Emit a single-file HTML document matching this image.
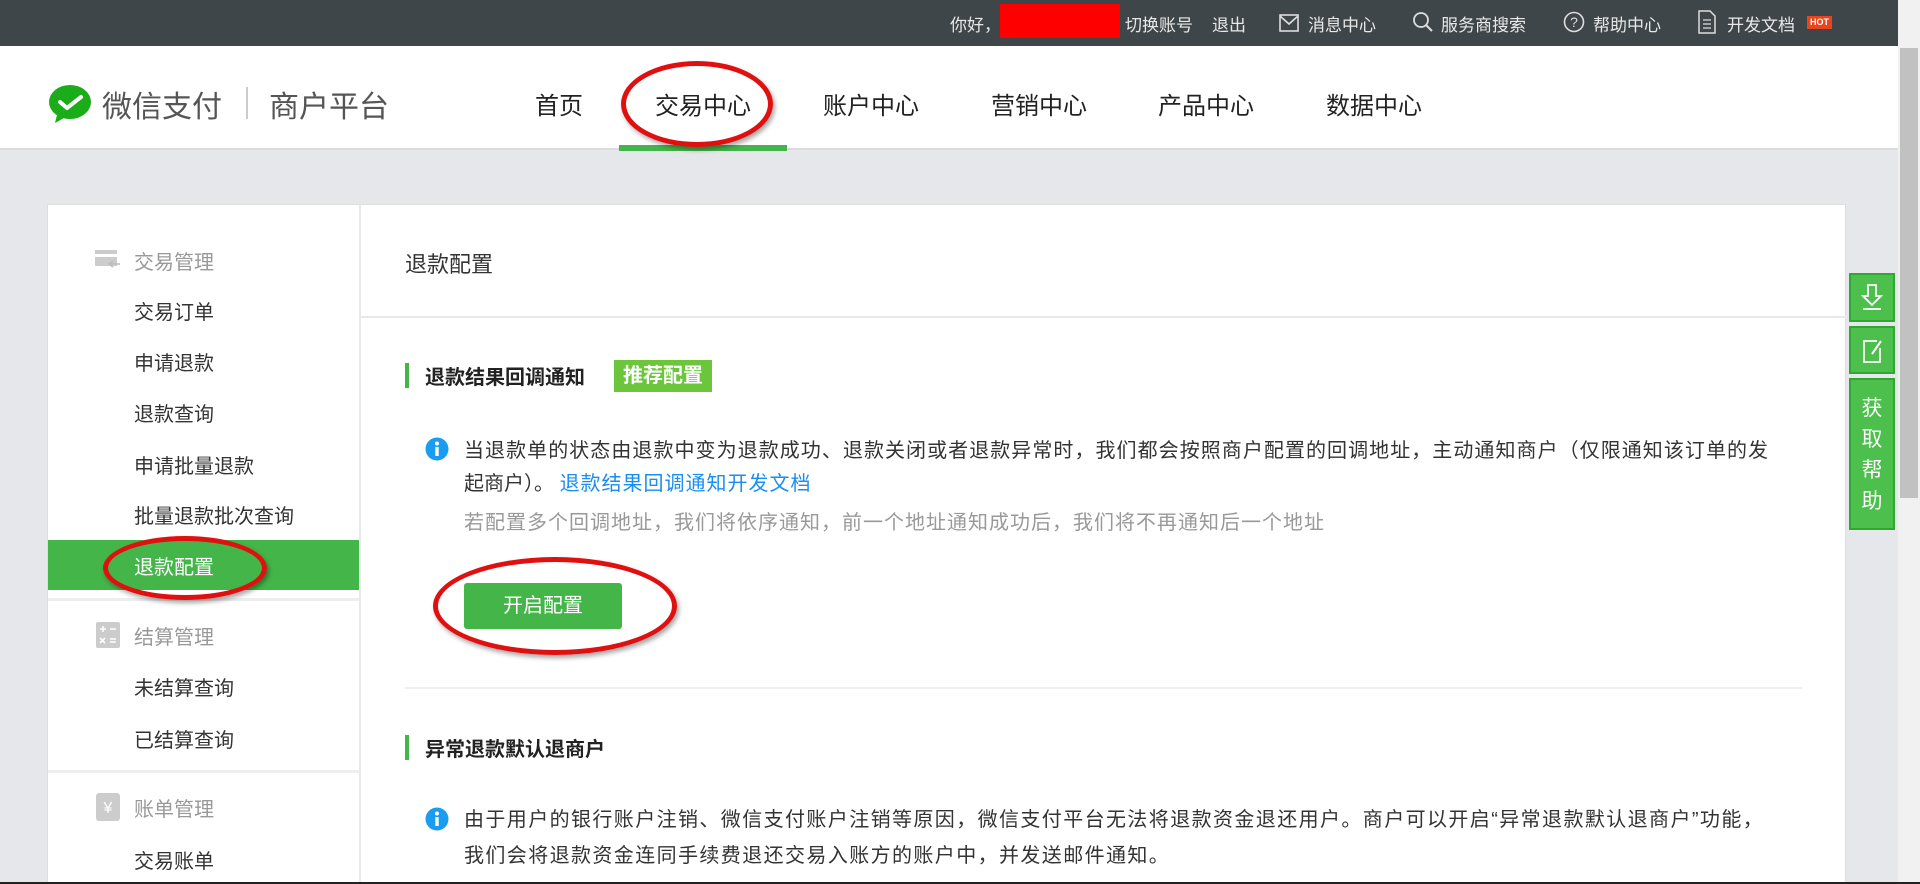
<!DOCTYPE html>
<html><head><meta charset="utf-8"><style>
*{margin:0;padding:0;box-sizing:border-box}
body{width:1920px;height:884px;overflow:hidden;background:#e6e7eb;font-family:"Liberation Sans","Noto Sans CJK SC",sans-serif;position:relative;color:#333}
.a{position:absolute;white-space:nowrap}
.top{left:0;top:0;width:1898px;height:46px;background:#3f4649}
.tt{color:#e8e8e8;font-size:17px;top:11px}
.hdr{left:0;top:46px;width:1898px;height:104px;background:#fff;border-bottom:2px solid #dcdcdc}
.nav{font-size:24px;color:#222;top:86px}
.side{font-size:20px;color:#333;left:134px}
.sideg{font-size:20px;color:#999;left:134px}
.body{font-size:20px;color:#333}
.ell{position:absolute;border:5px solid #e01010;border-radius:50%;box-shadow:2px 3px 5px rgba(0,0,0,.35)}
.fb{position:absolute;left:1849px;width:46px;background:#4cbf4c;border:2px solid #2fa82f}
</style></head><body>
<div class="a top"></div>
<div class="a tt" style="left:950px">你好，</div>
<div class="a" style="left:1000px;top:4px;width:120px;height:34px;background:#f00"></div>
<div class="a tt" style="left:1125px">切换账号</div>
<div class="a tt" style="left:1212px">退出</div>
<svg class="a" style="left:1279px;top:14px" width="20" height="18" viewBox="0 0 20 18"><rect x="1" y="1" width="18" height="16" fill="none" stroke="#ddd" stroke-width="1.6"/><path d="M1 2l9 8 9-8" fill="none" stroke="#ddd" stroke-width="1.6"/></svg>
<div class="a tt" style="left:1308px">消息中心</div>
<svg class="a" style="left:1412px;top:11px" width="22" height="22" viewBox="0 0 22 22"><circle cx="9" cy="9" r="7" fill="none" stroke="#ddd" stroke-width="1.8"/><path d="M14 14l6 6" stroke="#ddd" stroke-width="2"/></svg>
<div class="a tt" style="left:1441px">服务商搜索</div>
<svg class="a" style="left:1563px;top:11px" width="22" height="22" viewBox="0 0 22 22"><circle cx="11" cy="11" r="9.5" fill="none" stroke="#ddd" stroke-width="1.6"/><text x="11" y="16" font-size="14" fill="#ddd" text-anchor="middle" font-family="Liberation Sans">?</text></svg>
<div class="a tt" style="left:1593px">帮助中心</div>
<svg class="a" style="left:1698px;top:10px" width="18" height="24" viewBox="0 0 18 24"><path d="M1 1h11l5 5v17H1z" fill="none" stroke="#ddd" stroke-width="1.5"/><path d="M5 10h8M5 14h8M5 18h8" stroke="#ddd" stroke-width="1.3"/></svg>
<div class="a tt" style="left:1727px">开发文档</div>
<div class="a" style="left:1807px;top:16px;width:25px;height:13px;background:#e8441d;color:#fff;font-size:9px;font-weight:bold;line-height:13px;text-align:center">HOT</div>
<div class="a" style="left:1898px;top:0;width:22px;height:884px;background:#f1f1f1"></div>
<div class="a" style="left:1900px;top:48px;width:18px;height:450px;background:#c1c1c1"></div>

<div class="a hdr"></div>
<svg class="a" style="left:48px;top:84px" width="46" height="40" viewBox="0 0 46 40"><ellipse cx="22" cy="18" rx="21" ry="17" fill="#1aad19"/><path d="M9 31l-2 8 9-5z" fill="#1aad19"/><path d="M12 18l7 6 14-11" fill="none" stroke="#fff" stroke-width="4" stroke-linecap="round" stroke-linejoin="round"/></svg>
<div class="a" style="left:102px;top:82px;font-size:30px;color:#555">微信支付</div>
<div class="a" style="left:246px;top:87px;width:2px;height:32px;background:#ccc"></div>
<div class="a" style="left:269px;top:82px;font-size:30px;color:#555">商户平台</div>
<div class="a nav" style="left:535px">首页</div>
<div class="a nav" style="left:655px">交易中心</div>
<div class="a nav" style="left:823px">账户中心</div>
<div class="a nav" style="left:991px">营销中心</div>
<div class="a nav" style="left:1158px">产品中心</div>
<div class="a nav" style="left:1326px">数据中心</div>
<div class="a" style="left:619px;top:145px;width:168px;height:6px;background:#44b549"></div>

<div class="a" style="left:47px;top:204px;width:1799px;height:680px;background:#fff;border:1px solid #ddd"></div>
<div class="a" style="left:359px;top:205px;width:2px;height:679px;background:#e8e8e8"></div>
<svg class="a" style="left:95px;top:250px" width="26" height="20" viewBox="0 0 26 20"><rect x="0" y="0" width="22" height="16" fill="#ccc"/><rect x="0" y="4" width="22" height="3" fill="#fff"/><path d="M14 14h11M18 11l-4 3 4 3" stroke="#bbb" stroke-width="1.6" fill="none"/></svg>
<div class="a sideg" style="top:246px">交易管理</div>
<div class="a side" style="top:296px">交易订单</div>
<div class="a side" style="top:347px">申请退款</div>
<div class="a side" style="top:398px">退款查询</div>
<div class="a side" style="top:450px">申请批量退款</div>
<div class="a side" style="top:500px">批量退款批次查询</div>
<div class="a" style="left:48px;top:540px;width:311px;height:50px;background:#44b549"></div>
<div class="a side" style="top:551px;color:#fff">退款配置</div>
<div class="a" style="left:48px;top:598px;width:311px;height:3px;background:#eee"></div>
<svg class="a" style="left:96px;top:622px" width="24" height="26" viewBox="0 0 24 26"><rect width="24" height="26" rx="2" fill="#ccc"/><path d="M4 7h6M7 4v6M14 7h6M4 16l5 5M9 16l-5 5M14 17h6M14 20h6" stroke="#fff" stroke-width="1.6"/></svg>
<div class="a sideg" style="top:621px">结算管理</div>
<div class="a side" style="top:672px">未结算查询</div>
<div class="a side" style="top:724px">已结算查询</div>
<div class="a" style="left:48px;top:770px;width:311px;height:3px;background:#eee"></div>
<svg class="a" style="left:96px;top:793px" width="24" height="28" viewBox="0 0 24 28"><rect width="24" height="28" rx="3" fill="#ccc"/><text x="12" y="20" font-size="16" fill="#fff" text-anchor="middle" font-family="Liberation Sans">¥</text></svg>
<div class="a sideg" style="top:793px">账单管理</div>
<div class="a side" style="top:845px">交易账单</div>

<div class="a" style="left:405px;top:247px;font-size:22px;color:#333">退款配置</div>
<div class="a" style="left:361px;top:316px;width:1485px;height:2px;background:#e8e8e8"></div>
<div class="a" style="left:405px;top:363px;width:4px;height:25px;background:#44b549"></div>
<div class="a" style="left:425px;top:361px;font-size:20px;font-weight:bold;color:#222">退款结果回调通知</div>
<div class="a" style="left:614px;top:360px;width:98px;height:32px;background:#6cc63c;color:#fff;font-size:20px;font-weight:bold;text-align:center;line-height:32px">推荐配置</div>
<svg class="a" style="left:425px;top:437px" width="24" height="24" viewBox="0 0 24 24"><circle cx="12" cy="12" r="11.5" fill="#1a9cf0"/><rect x="10.3" y="10" width="3.4" height="9" fill="#fff"/><circle cx="12" cy="6.5" r="2" fill="#fff"/></svg>
<div class="a body" style="left:464px;top:434px;letter-spacing:1.05px">当退款单的状态由退款中变为退款成功、退款关闭或者退款异常时，我们都会按照商户配置的回调地址，主动通知商户（仅限通知该订单的发</div>
<div class="a body" style="left:464px;top:467px">起商户）。 <span style="color:#1a8ef0;letter-spacing:1px">退款结果回调通知开发文档</span></div>
<div class="a body" style="left:464px;top:506px;color:#999;letter-spacing:1px">若配置多个回调地址，我们将依序通知，前一个地址通知成功后，我们将不再通知后一个地址</div>
<div class="a" style="left:464px;top:583px;width:158px;height:46px;background:#44b549;border-radius:3px;color:#fff;font-size:20px;text-align:center;line-height:46px">开启配置</div>
<div class="a" style="left:405px;top:687px;width:1397px;height:2px;background:#f0f0f0"></div>
<div class="a" style="left:405px;top:735px;width:4px;height:25px;background:#44b549"></div>
<div class="a" style="left:425px;top:733px;font-size:20px;font-weight:bold;color:#222">异常退款默认退商户</div>
<svg class="a" style="left:425px;top:807px" width="24" height="24" viewBox="0 0 24 24"><circle cx="12" cy="12" r="11.5" fill="#1a9cf0"/><rect x="10.3" y="10" width="3.4" height="9" fill="#fff"/><circle cx="12" cy="6.5" r="2" fill="#fff"/></svg>
<div class="a body" style="left:464px;top:803px;letter-spacing:1.4px">由于用户的银行账户注销、微信支付账户注销等原因，微信支付平台无法将退款资金退还用户。商户可以开启“异常退款默认退商户”功能，</div>
<div class="a body" style="left:464px;top:839px;letter-spacing:1.4px">我们会将退款资金连同手续费退还交易入账方的账户中，并发送邮件通知。</div>

<div class="fb" style="top:273px;height:49px"><svg width="42" height="45" viewBox="0 0 42 45"><path d="M17 10h8v11h5l-9 9-9-9h5z" fill="none" stroke="#fff" stroke-width="1.8"/><path d="M12 34h18" stroke="#fff" stroke-width="1.8"/></svg></div>
<div class="fb" style="top:326px;height:48px"><svg width="42" height="44" viewBox="0 0 42 44"><path d="M26 13H13v21h16V20" fill="none" stroke="#fff" stroke-width="1.8"/><path d="M21 26l9-13" stroke="#fff" stroke-width="2"/></svg></div>
<div class="fb" style="top:378px;height:152px;color:#fff;font-size:21px;text-align:center;line-height:31px;padding-top:13px">获<br>取<br>帮<br>助</div>

<div class="ell" style="left:621px;top:61px;width:152px;height:86px"></div>
<div class="ell" style="left:103px;top:536px;width:164px;height:64px"></div>
<div class="ell" style="left:433px;top:557px;width:244px;height:98px"></div>
<div class="a" style="left:0;top:882px;width:1920px;height:2px;background:#222"></div>
</body></html>
